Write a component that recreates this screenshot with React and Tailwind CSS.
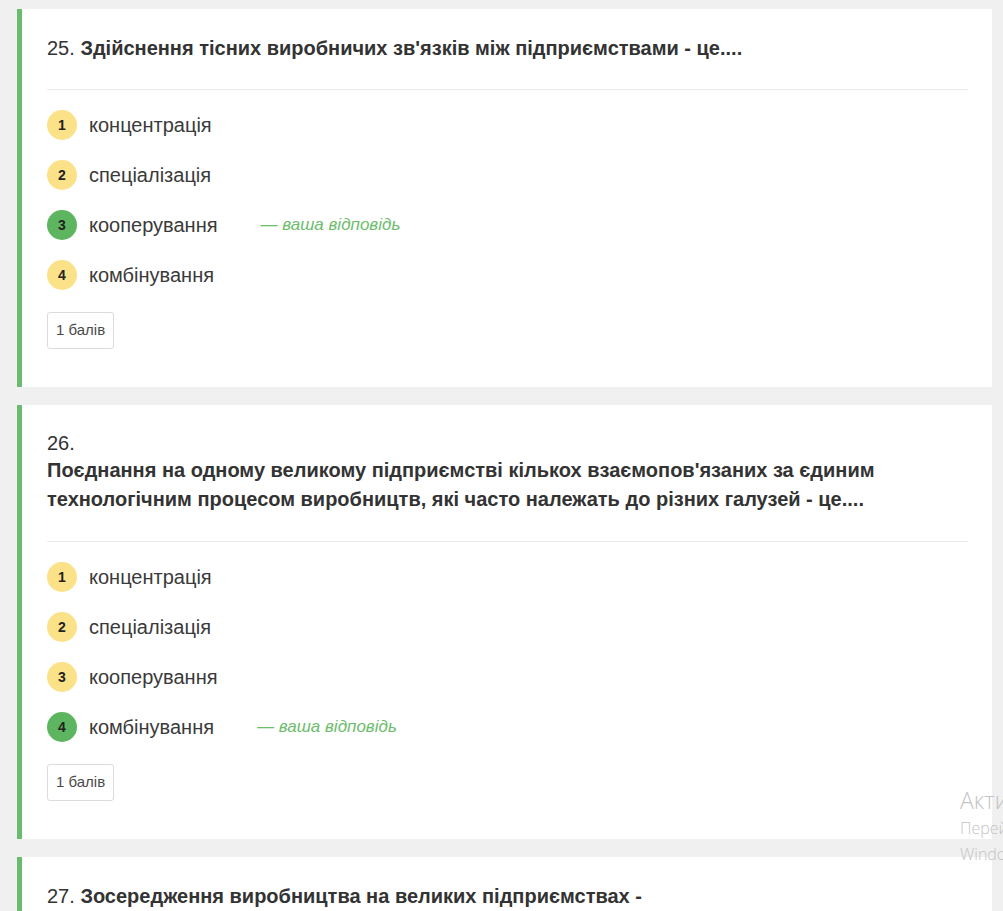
import React from 'react';

const questions = [
    {
        num: 25,
        text: "Здійснення тісних виробничих зв'язків між підприємствами - це....",
        inline: true,
        answer: 3,
    },
    {
        num: 26,
        text: "Поєднання на одному великому підприємстві кількох взаємопов'язаних за єдиним технологічним процесом виробництв, які часто належать до різних галузей - це....",
        inline: false,
        answer: 4,
    },
    {
        num: 27,
        text: 'Зосередження виробництва на великих підприємствах -',
        tail: 'це....',
        inline: true,
        answer: 1,
    },
];

const options = ['концентрація', 'спеціалізація', 'кооперування', 'комбінування'];

const Option = ({ index, label, chosen }) => (
    <div className="flex items-center h-[30px]">
        <span
            className={`w-[30px] h-[30px] rounded-full flex items-center justify-center text-[14px] font-bold text-[#222] shrink-0 ${
                chosen ? 'bg-[#5db65f]' : 'bg-[#fbe187]'
            }`}
        >
            {index}
        </span>
        <span className="ml-3 text-[20px] text-[#3a3a3a]">{label}</span>
        {chosen && (
            <span className="ml-[43px] text-[17px] italic text-[#6cbd6c]">— ваша відповідь</span>
        )}
    </div>
);

const QuestionCard = ({ q }) => (
    <div className="bg-white border-l-[5px] border-[#6abb6e] pl-[25px] pr-[24px] pt-[25px] pb-[38px]">
        <div className="text-[20px] text-[#333] pb-[27px] border-b border-[#ebebeb]">
            {q.inline ? (
                <div className="leading-[28px]">
                    {q.num}. <span className="font-bold">{q.text}</span>
                    {q.tail && (
                        <>
                            <br />
                            <span className="font-bold">{q.tail}</span>
                        </>
                    )}
                </div>
            ) : (
                <>
                    <div className="leading-[26px]">{q.num}.</div>
                    <div className="font-bold leading-[29px]">{q.text}</div>
                </>
            )}
        </div>
        <div className="flex flex-col gap-5 pt-[20px]">
            {options.map((o, i) => (
                <Option key={o} index={i + 1} label={o} chosen={q.answer === i + 1} />
            ))}
        </div>
        <div className="mt-[22px] inline-flex items-center h-[37px] px-[8px] border border-[#dcdcdc] rounded-[3px] text-[15px] text-[#4a4a4a]">
            1 балів
        </div>
    </div>
);

export default function App() {
    return (
        <div
            className="relative min-h-screen bg-[#f0f0f0] pt-[9px] pl-[17px] pr-[11px] overflow-hidden"
            style={{ fontFamily: '"Liberation Sans", Arial, sans-serif' }}
        >
            <div className="flex flex-col gap-[18px]">
                {questions.map((q) => (
                    <QuestionCard key={q.num} q={q} />
                ))}
            </div>
            <div
                className="absolute left-[960px] top-[785px] whitespace-nowrap text-[#c4c4c4] pointer-events-none"
                style={{ fontFamily: '"Open Sans", sans-serif' }}
            >
                <div className="text-[23px] leading-[30px] font-light">Активація Windows</div>
                <div className="text-[16px] leading-[26px] font-light">Перейдіть до розділу «Параметри»,</div>
                <div className="text-[16px] leading-[26px] font-light">Windows.</div>
            </div>
        </div>
    );
}
